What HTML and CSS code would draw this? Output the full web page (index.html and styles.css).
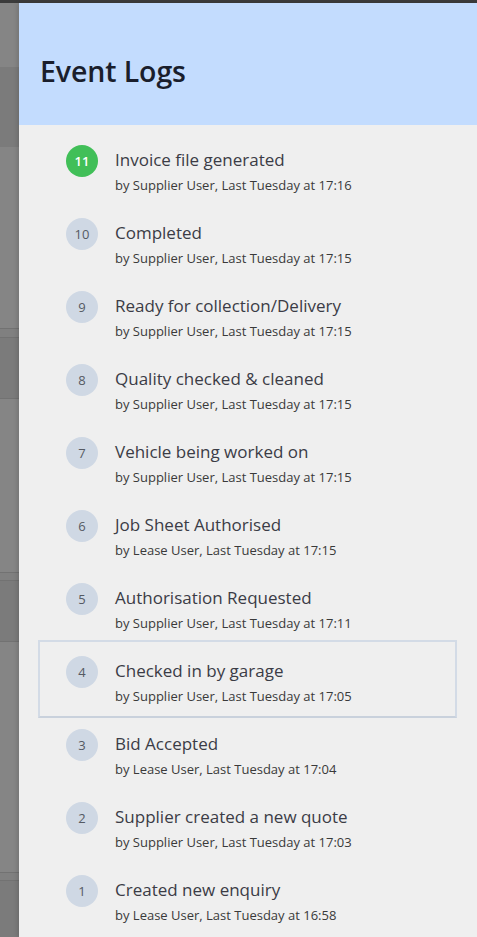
FILE: index.html
```html
<!DOCTYPE html>
<html lang="en">
<head>
<meta charset="utf-8">
<title>Event Logs</title>
<link rel="stylesheet" href="styles.css">
</head>
<body>
<div class="topbar"></div>
<div class="screen">
  <div class="backdrop">
    <div class="band b1"></div>
    <div class="band b2"></div>
    <div class="band b3"></div>
    <div class="band b4"></div>
    <div class="band b5"></div>
    <div class="band b6"></div>
    <div class="band b7"></div>
    <div class="band b8"></div>
    <div class="band b9"></div>
    <div class="band b10"></div>
    <div class="band b11"></div>
  </div>
  <aside class="panel">
    <header class="panel-header">
      <h1 class="panel-title">Event Logs</h1>
    </header>
    <ol class="log-list">
      <li class="log-row">
        <span class="badge badge-done">11</span>
        <div class="log-text">
          <div class="log-title">Invoice file generated</div>
          <div class="log-meta">by Supplier User, Last Tuesday at 17:16</div>
        </div>
      </li>
      <li class="log-row">
        <span class="badge">10</span>
        <div class="log-text">
          <div class="log-title">Completed</div>
          <div class="log-meta">by Supplier User, Last Tuesday at 17:15</div>
        </div>
      </li>
      <li class="log-row">
        <span class="badge">9</span>
        <div class="log-text">
          <div class="log-title">Ready for collection/Delivery</div>
          <div class="log-meta">by Supplier User, Last Tuesday at 17:15</div>
        </div>
      </li>
      <li class="log-row">
        <span class="badge">8</span>
        <div class="log-text">
          <div class="log-title">Quality checked &amp; cleaned</div>
          <div class="log-meta">by Supplier User, Last Tuesday at 17:15</div>
        </div>
      </li>
      <li class="log-row">
        <span class="badge">7</span>
        <div class="log-text">
          <div class="log-title">Vehicle being worked on</div>
          <div class="log-meta">by Supplier User, Last Tuesday at 17:15</div>
        </div>
      </li>
      <li class="log-row">
        <span class="badge">6</span>
        <div class="log-text">
          <div class="log-title">Job Sheet Authorised</div>
          <div class="log-meta">by Lease User, Last Tuesday at 17:15</div>
        </div>
      </li>
      <li class="log-row">
        <span class="badge">5</span>
        <div class="log-text">
          <div class="log-title">Authorisation Requested</div>
          <div class="log-meta">by Supplier User, Last Tuesday at 17:11</div>
        </div>
      </li>
      <li class="log-row is-active">
        <span class="badge">4</span>
        <div class="log-text">
          <div class="log-title">Checked in by garage</div>
          <div class="log-meta">by Supplier User, Last Tuesday at 17:05</div>
        </div>
      </li>
      <li class="log-row">
        <span class="badge">3</span>
        <div class="log-text">
          <div class="log-title">Bid Accepted</div>
          <div class="log-meta">by Lease User, Last Tuesday at 17:04</div>
        </div>
      </li>
      <li class="log-row">
        <span class="badge">2</span>
        <div class="log-text">
          <div class="log-title">Supplier created a new quote</div>
          <div class="log-meta">by Supplier User, Last Tuesday at 17:03</div>
        </div>
      </li>
      <li class="log-row">
        <span class="badge">1</span>
        <div class="log-text">
          <div class="log-title">Created new enquiry</div>
          <div class="log-meta">by Lease User, Last Tuesday at 16:58</div>
        </div>
      </li>
    </ol>
  </aside>
</div>
</body>
</html>
```

FILE: styles.css
```css
* { box-sizing: border-box; }

html, body {
  margin: 0;
  padding: 0;
  height: 100%;
  overflow: hidden;
}

body {
  font-family: "Open Sans", "Noto Sans", sans-serif;
  background: #efefef;
  display: flex;
  flex-direction: column;
}

.topbar {
  height: 3px;
  background: #3b3b3b;
  flex: none;
}

.screen {
  flex: 1;
  display: flex;
  min-height: 0;
}

.backdrop {
  width: 19px;
  flex: none;
  display: flex;
  flex-direction: column;
  background: #858585;
}

.band { flex: none; border-bottom: 1px solid #727272; }
.b1 { height: 64px; background: #858585; border-bottom: none; }
.b2 { height: 80px; background: #7b7b7b; border-bottom: none; }
.b3 { height: 182px; background: #858585; }
.b4 { height: 9px; background: #808080; }
.b5 { height: 61px; background: #7b7b7b; }
.b6 { height: 174px; background: #858585; }
.b7 { height: 8px; background: #808080; }
.b8 { height: 61px; background: #7b7b7b; }
.b9 { height: 231px; background: #858585; }
.b10 { height: 8px; background: #808080; }
.b11 { height: 80px; background: #7b7b7b; border-bottom: none; }

.panel {
  flex: 1;
  background: #efefef;
  display: flex;
  flex-direction: column;
  box-shadow: -2px 0 4px rgba(0, 0, 0, 0.12);
  min-width: 0;
}

.panel-header {
  height: 122px;
  flex: none;
  background: #c3dcfe;
  display: flex;
  align-items: center;
  padding: 13px 21px 0;
}

.panel-title {
  margin: 0;
  font-size: 28.5px;
  font-weight: 600;
  color: #1a1e2c;
  letter-spacing: -0.1px;
}

.log-list {
  list-style: none;
  margin: 0;
  padding: 4px 20px 0 19px;
}

.log-row {
  height: 78px;
  margin-bottom: -5px;
  border: 2px solid transparent;
  padding: 14px 12px 0 26px;
  display: flex;
  align-items: flex-start;
  gap: 17px;
}

.log-row.is-active {
  border-color: #d3dbe6;
  border-bottom-color: #c9d1dc;
}

.badge {
  flex: none;
  width: 32px;
  height: 32px;
  border-radius: 50%;
  background: #cfd8e4;
  color: #555a63;
  font-size: 13px;
  display: flex;
  align-items: center;
  justify-content: center;
}

.badge-done {
  background: #41bf58;
  color: #ffffff;
  font-weight: 600;
}

.log-text {
  display: flex;
  flex-direction: column;
  min-width: 0;
  padding-top: 3px;
}

.log-title {
  font-size: 17px;
  line-height: 24px;
  color: #3b3c46;
  white-space: nowrap;
}

.log-meta {
  font-size: 13px;
  line-height: 22px;
  margin-top: 2px;
  color: #3a3a3a;
  white-space: nowrap;
}
```
